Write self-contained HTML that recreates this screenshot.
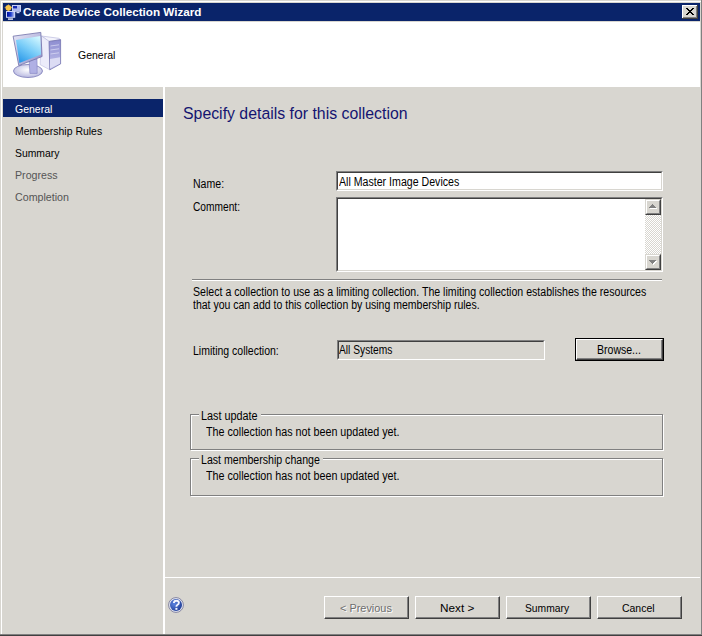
<!DOCTYPE html>
<html><head><meta charset="utf-8">
<style>
html,body{margin:0;padding:0;}
body{width:702px;height:636px;overflow:hidden;background:#D8D6D0;position:relative;font-family:"Liberation Sans",sans-serif;font-size:11px;color:#000;}
.a{position:absolute;}
.t{position:absolute;white-space:nowrap;transform-origin:0 0;}
.btn{position:absolute;box-sizing:border-box;background:#D8D6D0;border-top:1px solid #fff;border-left:1px solid #fff;border-right:1px solid #404040;border-bottom:1px solid #404040;}
.btn::after{content:"";position:absolute;left:0;top:0;right:0;bottom:0;border-right:1px solid #808080;border-bottom:1px solid #808080;}
.sbtn{position:absolute;box-sizing:border-box;width:16px;height:16px;background:#D8D6D0;border-top:1px solid #D8D6D0;border-left:1px solid #D8D6D0;border-right:1px solid #404040;border-bottom:1px solid #404040;}
.sbtn::after{content:"";position:absolute;left:0;top:0;right:0;bottom:0;border-top:1px solid #fff;border-left:1px solid #fff;border-right:1px solid #808080;border-bottom:1px solid #808080;}
.sunk{position:absolute;box-sizing:border-box;border-top:1px solid #808080;border-left:1px solid #808080;border-right:1px solid #fff;border-bottom:1px solid #fff;}
.sunk::before{content:"";position:absolute;left:0;top:0;right:0;bottom:0;border-top:1px solid #404040;border-left:1px solid #404040;border-right:1px solid #D8D6D0;border-bottom:1px solid #D8D6D0;}
</style></head><body>
<!-- window frame -->
<div class="a" style="left:1px;top:1px;width:701px;height:1px;background:#fff;"></div>
<div class="a" style="left:1px;top:1px;width:1px;height:633px;background:#fff;"></div>
<div class="a" style="left:701px;top:0;width:1px;height:636px;background:#808080;"></div>
<div class="a" style="left:0;top:634px;width:702px;height:1px;background:#808080;"></div>
<div class="a" style="left:0;top:635px;width:702px;height:1px;background:#404040;"></div>

<!-- title bar -->
<div class="a" style="left:3px;top:3px;width:697px;height:18px;background:#0A246A;"></div>
<svg class="a" style="left:4px;top:4px;" width="18" height="17" viewBox="0 0 18 17">
  <defs>
    <linearGradient id="ts" x1="0" y1="0" x2="1" y2="0"><stop offset="0" stop-color="#0010A0"/><stop offset="0.55" stop-color="#2040D0"/><stop offset="1" stop-color="#B8C4F4"/></linearGradient>
  </defs>
  <rect x="8" y="1" width="9" height="6.8" fill="#C8D0F4"/>
  <rect x="9" y="2" width="7" height="4.8" fill="#A8B4EC"/><rect x="9" y="2" width="4" height="2.4" fill="#1428B0"/>
  <rect x="12.5" y="8" width="3" height="1.2" fill="#D0D8F8"/>
  <path d="M4.4 0.2 L5.2 1.3 L3.6 1.3 Z M8.3 3.4 L7.2 4.2 L7.2 2.6 Z M4.4 7.4 L3.6 6.3 L5.2 6.3 Z M0.5 3.4 L1.6 2.6 L1.6 4.2 Z" fill="#F0C050"/><circle cx="4.4" cy="3.8" r="2.9" fill="#F8C448"/>
  <rect x="2" y="7" width="9.2" height="6.8" fill="#D0D8F8"/>
  <rect x="3" y="8" width="7.2" height="4.8" fill="url(#ts)"/>
  <rect x="4" y="14.4" width="5" height="1.4" fill="#E4E8FC"/>
</svg>
<!-- close btn -->
<div class="a" style="left:682px;top:5px;width:16px;height:14px;background:#404040;"></div>
<div class="a" style="left:682px;top:5px;width:15px;height:13px;background:#fff;"></div>
<div class="a" style="left:683px;top:6px;width:14px;height:12px;background:#808080;"></div>
<div class="a" style="left:683px;top:6px;width:13px;height:11px;background:#D8D6D0;"></div>
<svg class="a" style="left:686px;top:8px;" width="8" height="7" viewBox="0 0 8 7">
  <path shape-rendering="crispEdges" d="M0 0h2v1h-2zM6 0h2v1h-2zM1 1h2v1h-2zM5 1h2v1h-2zM2 2h4v1h-4zM3 3h2v1h-2zM2 4h4v1h-4zM1 5h2v1h-2zM5 5h2v1h-2zM0 6h2v1h-2zM6 6h2v1h-2z" fill="#000"/>
</svg>

<!-- header -->
<div class="a" style="left:3px;top:22px;width:697px;height:65px;background:#fff;"></div>
<svg class="a" style="left:8px;top:26px;" width="60" height="58" viewBox="0 0 60 58">
  <defs>
    <linearGradient id="scr" x1="0.8" y1="0" x2="0.2" y2="1">
      <stop offset="0" stop-color="#D0F6FF"/><stop offset="0.5" stop-color="#78CCF8"/><stop offset="1" stop-color="#2A98E8"/>
    </linearGradient>
    <linearGradient id="frm" x1="0" y1="0" x2="1" y2="1">
      <stop offset="0" stop-color="#E8E8F8"/><stop offset="1" stop-color="#9090C8"/>
    </linearGradient>
    <linearGradient id="twr" x1="0" y1="0" x2="1" y2="0">
      <stop offset="0" stop-color="#F0F0FA"/><stop offset="1" stop-color="#A0A0D0"/>
    </linearGradient>
    <radialGradient id="bas" cx="0.5" cy="0.4" r="0.6">
      <stop offset="0" stop-color="#FFFFFF"/><stop offset="1" stop-color="#B8B8E0"/>
    </radialGradient>
  </defs>
  <linearGradient id="fr2" x1="0" y1="0" x2="0" y2="1"><stop offset="0" stop-color="#8C8CD0"/><stop offset="1" stop-color="#C4C4EC"/></linearGradient>
  <path d="M33.5 10 L50.8 12.3 L52.6 13.7 L41.1 15.4 Z" fill="#F4F4FC" stroke="#A0A0D0" stroke-width="0.5"/>
  <path d="M33.5 10 L41.1 15.4 L41.8 43.8 L32.1 38.6 Z" fill="#ECECFA" stroke="#B0B0D8" stroke-width="0.5"/>
  <path d="M41.1 15.4 L52.6 13.7 L52.6 37.9 L41.8 43.8 Z" fill="url(#fr2)" stroke="#6A6AA8" stroke-width="0.7"/>
  <path d="M42.5 20 L51 18.8 M42.5 24 L51 22.8 M42.5 28 L51 26.8" stroke="#E0E0F8" stroke-width="1" opacity="0.7"/>
  <path d="M42 33 L52 31.3 L52 37.5 L42 42.5 Z" fill="#DCDCF4"/>
  <ellipse cx="20" cy="45" rx="14.5" ry="6.5" fill="url(#bas)" stroke="#7878B8" stroke-width="0.8"/>
  <path d="M21 33 L29 33 L29.2 47.4 L21.9 47.4 Z" fill="#B0B0E4" stroke="#8080C0" stroke-width="0.6"/>
  <path d="M5.1 10.2 L32.8 6.4 L34.1 30.5 L10.8 39.6 Z" fill="url(#frm)" stroke="#7070A8" stroke-width="0.8"/>
  <path d="M8 14 L32.2 9.9 L33.1 28.4 L11.4 36.9 Z" fill="url(#scr)"/>
</svg>

<!-- nav -->
<div class="a" style="left:3px;top:99px;width:160px;height:18px;background:#0A246A;"></div>
<div class="a" style="left:163px;top:87px;width:2px;height:547px;background:#fff;"></div>

<!-- content boxes -->
<div class="sunk" style="left:336px;top:171px;width:327px;height:20px;background:#fff;"></div>
<div class="sunk" style="left:336px;top:197px;width:327px;height:75px;background:#fff;"></div>
<div class="a" style="left:645px;top:199px;width:16px;height:71px;background-color:#fff;background-image:linear-gradient(45deg,#D8D6D0 25%,transparent 25%,transparent 75%,#D8D6D0 75%),linear-gradient(45deg,#D8D6D0 25%,transparent 25%,transparent 75%,#D8D6D0 75%);background-size:2px 2px;background-position:0 0,1px 1px;"></div>
<div class="sbtn" style="left:645px;top:199px;"></div>
<svg class="a" style="left:650px;top:205px;" width="7" height="4" viewBox="0 0 7 4"><path d="M3 0h1v1h1v1h1v1h1v1H0V3h1V2h1V1h1z" fill="#fff"/></svg>
<svg class="a" style="left:649px;top:204px;" width="7" height="4" viewBox="0 0 7 4"><path d="M3 0h1v1h1v1h1v1h1v1H0V3h1V2h1V1h1z" fill="#808080"/></svg>
<div class="sbtn" style="left:645px;top:254px;"></div>
<svg class="a" style="left:650px;top:261px;" width="7" height="4" viewBox="0 0 7 4"><path d="M0 0h7v1H6v1H5v1H4v1H3V3H2V2H1V1H0z" fill="#fff"/></svg>
<svg class="a" style="left:649px;top:260px;" width="7" height="4" viewBox="0 0 7 4"><path d="M0 0h7v1H6v1H5v1H4v1H3V3H2V2H1V1H0z" fill="#808080"/></svg>

<div class="a" style="left:192px;top:279px;width:470px;height:1px;background:#808080;"></div>
<div class="a" style="left:192px;top:280px;width:470px;height:1px;background:#fff;"></div>

<div class="sunk" style="left:337px;top:340px;width:208px;height:20px;"></div>
<div class="a" style="left:575px;top:338px;width:89px;height:23px;background:#000;"></div>
<div class="btn" style="left:576px;top:339px;width:87px;height:21px;"></div>

<!-- group boxes -->
<div class="a" style="left:191px;top:415px;width:473px;height:36px;box-sizing:border-box;border:1px solid #fff;"></div>
<div class="a" style="left:190px;top:414px;width:473px;height:36px;box-sizing:border-box;border:1px solid #808080;"></div>
<div class="a" style="left:199px;top:410px;width:62px;height:8px;background:#D8D6D0;"></div>
<div class="a" style="left:191px;top:459px;width:473px;height:38px;box-sizing:border-box;border:1px solid #fff;"></div>
<div class="a" style="left:190px;top:458px;width:473px;height:38px;box-sizing:border-box;border:1px solid #808080;"></div>
<div class="a" style="left:199px;top:454px;width:124px;height:8px;background:#D8D6D0;"></div>

<!-- footer -->
<div class="a" style="left:165px;top:577px;width:535px;height:1px;background:#fff;"></div>
<svg class="a" style="left:168px;top:597px;" width="16" height="16" viewBox="0 0 16 16">
  <defs><radialGradient id="hb" cx="0.35" cy="0.4" r="0.75"><stop offset="0" stop-color="#5C84E0"/><stop offset="1" stop-color="#1C3890"/></radialGradient></defs>
  <circle cx="8" cy="8" r="7.4" fill="#E4E8F4" stroke="#7A7A98" stroke-width="0.9"/>
  <circle cx="8" cy="8" r="6" fill="url(#hb)"/>
  <path d="M5.9 6.1 Q5.9 3.7 8.3 3.7 Q10.9 3.7 10.9 5.8 Q10.9 7.2 9.3 8 Q8.4 8.5 8.4 9.8" fill="none" stroke="#F4F6FF" stroke-width="1.9"/>
  <rect x="7.4" y="10.9" width="2" height="1.9" fill="#F4F6FF"/>
</svg>
<div class="btn" style="left:324px;top:596px;width:85px;height:23px;"></div>
<div class="btn" style="left:415px;top:596px;width:85px;height:23px;"></div>
<div class="btn" style="left:506px;top:596px;width:85px;height:23px;"></div>
<div class="btn" style="left:597px;top:596px;width:85px;height:23px;"></div>

<!-- texts -->
<div class="t" style="left:23px;top:5px;font-size:11.7px;line-height:13px;color:#fff;font-weight:bold;">Create Device Collection Wizard</div>
<div class="t" style="left:78px;top:49px;font-size:11px;line-height:13px;color:#000;font-weight:normal;transform:scaleX(0.953);">General</div>
<div class="t" style="left:15px;top:103px;font-size:11px;line-height:13px;color:#fff;font-weight:normal;transform:scaleX(0.955);">General</div>
<div class="t" style="left:15px;top:125px;font-size:11px;line-height:13px;color:#000;font-weight:normal;transform:scaleX(0.95);">Membership Rules</div>
<div class="t" style="left:15px;top:147px;font-size:11px;line-height:13px;color:#000;font-weight:normal;transform:scaleX(0.943);">Summary</div>
<div class="t" style="left:15px;top:169px;font-size:11px;line-height:13px;color:#555;font-weight:normal;transform:scaleX(0.967);">Progress</div>
<div class="t" style="left:15px;top:191px;font-size:11px;line-height:13px;color:#555;font-weight:normal;transform:scaleX(0.97);">Completion</div>
<div class="t" style="left:183px;top:105px;font-size:15.85px;line-height:18px;color:#141470;font-weight:normal;">Specify details for this collection</div>
<div class="t" style="left:193px;top:177px;font-size:12px;line-height:14px;color:#000;font-weight:normal;transform:scaleX(0.879);">Name:</div>
<div class="t" style="left:339px;top:175px;font-size:12px;line-height:14px;color:#000;font-weight:normal;transform:scaleX(0.884);">All Master Image Devices</div>
<div class="t" style="left:193px;top:200px;font-size:12px;line-height:14px;color:#000;font-weight:normal;transform:scaleX(0.849);">Comment:</div>
<div class="t" style="left:193px;top:285px;font-size:12px;line-height:14px;color:#000;font-weight:normal;transform:scaleX(0.883);">Select a collection to use as a limiting collection. The limiting collection establishes the resources</div>
<div class="t" style="left:193px;top:298px;font-size:12px;line-height:14px;color:#000;font-weight:normal;transform:scaleX(0.875);">that you can add to this collection by using membership rules.</div>
<div class="t" style="left:193px;top:344px;font-size:12px;line-height:14px;color:#000;font-weight:normal;transform:scaleX(0.875);">Limiting collection:</div>
<div class="t" style="left:339px;top:343px;font-size:12px;line-height:14px;color:#000;font-weight:normal;transform:scaleX(0.852);">All Systems</div>
<div class="t" style="left:597px;top:343px;font-size:12px;line-height:14px;color:#000;font-weight:normal;transform:scaleX(0.877);">Browse...</div>
<div class="t" style="left:201px;top:409px;font-size:12px;line-height:14px;color:#000;font-weight:normal;transform:scaleX(0.903);">Last update</div>
<div class="t" style="left:206px;top:425px;font-size:12px;line-height:14px;color:#000;font-weight:normal;transform:scaleX(0.895);">The collection has not been updated yet.</div>
<div class="t" style="left:201px;top:453px;font-size:12px;line-height:14px;color:#000;font-weight:normal;transform:scaleX(0.882);">Last membership change</div>
<div class="t" style="left:206px;top:469px;font-size:12px;line-height:14px;color:#000;font-weight:normal;transform:scaleX(0.895);">The collection has not been updated yet.</div>
<div class="t" style="left:341px;top:603px;font-size:11px;line-height:13px;color:#fff;font-weight:normal;transform:scaleX(0.992);">&lt; Previous</div>
<div class="t" style="left:340px;top:602px;font-size:11px;line-height:13px;color:#6E6E6E;font-weight:normal;transform:scaleX(0.992);">&lt; Previous</div>
<div class="t" style="left:440px;top:602px;font-size:11px;line-height:13px;color:#000;font-weight:normal;transform:scaleX(1.068);">Next &gt;</div>
<div class="t" style="left:525px;top:602px;font-size:11px;line-height:13px;color:#000;font-weight:normal;transform:scaleX(0.937);">Summary</div>
<div class="t" style="left:622px;top:602px;font-size:11px;line-height:13px;color:#000;font-weight:normal;transform:scaleX(0.951);">Cancel</div>
</body></html>
